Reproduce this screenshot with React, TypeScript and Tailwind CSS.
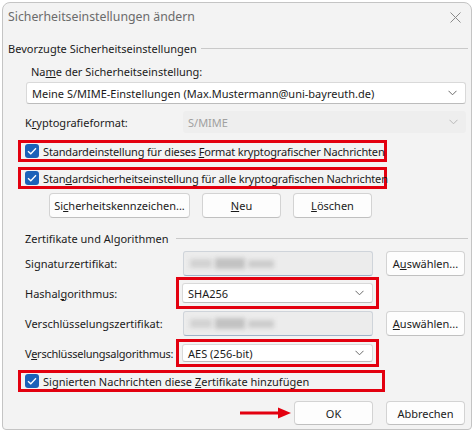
import React from 'react';

const font = { fontFamily: '"Noto Sans", "Open Sans", sans-serif' };

function Chevron({ light = false }: { light?: boolean }) {
  return (
    <svg width="9" height="6" viewBox="0 0 9 6" className="shrink-0">
      <path d="M0.5 0.8 L4.5 4.8 L8.5 0.8" fill="none" stroke={light ? '#b8b8b8' : '#6b6b6b'} strokeWidth="1" />
    </svg>
  );
}

function Check() {
  return (
    <span className="w-[14px] h-[14px] rounded-[3px] bg-[#1c62b9] flex items-center justify-center shrink-0">
      <svg width="10" height="8" viewBox="0 0 10 8">
        <path d="M1 4.2 L3.8 6.8 L9 1.2" fill="none" stroke="#ffffff" strokeWidth="1.3" />
      </svg>
    </span>
  );
}

function Btn({ children, w }: { children: React.ReactNode; w: string }) {
  return (
    <div className={`${w} h-full flex items-center justify-center bg-[#fdfdfd] border border-[#d3d3d3] border-b-[#c0c0c0] rounded-[4px] text-[#1b1b1b]`}>
      {children}
    </div>
  );
}

function Blurred() {
  return (
    <div className="w-[190px] h-full bg-[#ececec] border border-[#cfd4da] border-b-[#9fb2c8] rounded-[3px] overflow-hidden flex items-center pl-[6px] gap-[3px]">
      <div className="w-[22px] h-[9px] bg-[#d2d2d2] blur-[2px]" />
      <div className="w-[30px] h-[11px] bg-[#c2c2c2] blur-[2px]" />
      <div className="w-[26px] h-[8px] bg-[#cccccc] blur-[2px]" />
    </div>
  );
}

function Select({ text }: { text: string }) {
  return (
    <div className="w-full h-full bg-white border border-[#d9d9d9] border-b-[#bcbcbc] rounded-[3px] flex items-center justify-between pl-[5px] pr-[8px] text-[#1b1b1b]">
      <span>{text}</span>
      <Chevron />
    </div>
  );
}

export default function App() {
  return (
    <div className="w-[474px] h-[435px] bg-white pl-[2px] pt-[2px] text-[11px] leading-none" style={font}>
      <div className="w-[470px] h-[428px] bg-[#f3f3f3] border border-[#c4c4c4] rounded-t-[8px] rounded-b-[4px] flex flex-col text-[#1b1b1b]">
        {/* title bar */}
        <div className="h-[28px] flex items-center justify-between pl-[5px] pr-[10px]">
          <span className="text-[12.3px] text-[#6b6b6b]">Sicherheitseinstellungen ändern</span>
          <svg width="11" height="11" viewBox="0 0 11 11">
            <path d="M0.5 0.5 L10.5 10.5 M10.5 0.5 L0.5 10.5" stroke="#8a8a8a" strokeWidth="1" />
          </svg>
        </div>

        {/* group 1 */}
        <div className="mt-[8px] h-[18px] flex items-center pl-[5px] pr-[3px]">
          <span>Bevorzugte Sicherheitseinstellungen</span>
          <div className="flex-1 h-px bg-[#c9c9c9] ml-[4px]" />
        </div>

        <div className="mt-[6px] h-[16px] flex items-center pl-[28px]">
          <span>Na<u>m</u>e der Sicherheitseinstellung:</span>
        </div>

        <div className="mt-[3px] h-[22px] ml-[23px] w-[440px]">
          <Select text="Meine S/MIME-Einstellungen (Max.Mustermann@uni-bayreuth.de)" />
        </div>

        <div className="mt-[7px] h-[22px] flex items-center pl-[22px]">
          <span className="w-[158px]">K<u>r</u>yptografieformat:</span>
          <div className="w-[283px] h-full bg-[#eeeeee] rounded-[3px] flex items-center justify-between pl-[5px] pr-[8px] text-[#a0a0a0]">
            <span>S/MIME</span>
            <Chevron light />
          </div>
        </div>

        <div className="mt-[7px] h-[22px] ml-[15px] w-[369px] border-[3px] border-[#e3000f] flex items-center pl-[4px] gap-[4px] whitespace-nowrap">
          <Check />
          <span className="tracking-[-0.16px]">Standardeinstellung für dieses <u>F</u>ormat kryptografischer Nachrichten</span>
        </div>

        <div className="mt-[5px] h-[22px] ml-[15px] w-[369px] border-[3px] border-[#e3000f] flex items-center pl-[4px] gap-[4px] whitespace-nowrap">
          <Check />
          <span className="tracking-[-0.16px]">Stan<u>d</u>ardsicherheitseinstellung für alle kryptografischen Nachrichten</span>
        </div>

        <div className="mt-[4px] h-[25px] flex ml-[46px] gap-[12px]">
          <Btn w="w-[141px]">Si<u>c</u>herheitskennzeichen...</Btn>
          <Btn w="w-[79px]"><u>N</u>eu</Btn>
          <Btn w="w-[79px]"><u>L</u>öschen</Btn>
        </div>

        {/* group 2 */}
        <div className="mt-[11px] h-[18px] flex items-center pl-[22px] pr-[3px]">
          <span>Zertifikate und Algorithmen</span>
          <div className="flex-1 h-px bg-[#c9c9c9] ml-[7px]" />
        </div>

        <div className="mt-[4px] h-[25px] flex items-center pl-[22px]">
          <span className="w-[158px]">Signaturzertifikat:</span>
          <Blurred />
          <div className="ml-[13px] h-full">
            <Btn w="w-[79px]">A<u>u</u>swählen...</Btn>
          </div>
        </div>

        <div className="mt-[1px] h-[32px] flex items-center pl-[22px]">
          <span className="w-[151px]">Hashal<u>g</u>orithmus:</span>
          <div className="w-[203px] h-full border-[3px] border-[#e3000f] p-[3px]">
            <Select text="SHA256" />
          </div>
        </div>

        <div className="mt-[2px] h-[25px] flex items-center pl-[22px]">
          <span className="w-[158px]">Verschlüsselungszertifikat:</span>
          <Blurred />
          <div className="ml-[13px] h-full">
            <Btn w="w-[79px]"><u>A</u>uswählen...</Btn>
          </div>
        </div>

        <div className="mt-[3px] h-[28px] flex items-center pl-[22px]">
          <span className="w-[151px] whitespace-nowrap tracking-[-0.25px]">V<u>e</u>rschlüsselungsalgorithmus:</span>
          <div className="w-[203px] h-full border-[3px] border-[#e3000f] px-[3px] py-[2px]">
            <Select text="AES (256-bit)" />
          </div>
        </div>

        <div className="mt-[3px] h-[22px] ml-[15px] w-[367px] border-[3px] border-[#e3000f] flex items-center pl-[4px] gap-[4px] whitespace-nowrap">
          <Check />
          <span>Signierten Nachrichten diese <u>Z</u>ertifikate hinzufügen</span>
        </div>

        <div className="mt-[9px] h-[24px] flex items-center ml-[237px]">
          <svg width="52" height="12" viewBox="0 0 52 12" className="shrink-0">
            <path d="M0 6 L42 6" stroke="#e3000f" strokeWidth="3" />
            <path d="M38 0.5 L51 6 L38 11.5 Z" fill="#e3000f" />
          </svg>
          <div className="ml-[2px] h-full">
            <Btn w="w-[79px]">OK</Btn>
          </div>
          <div className="ml-[13px] h-full">
            <Btn w="w-[79px]">Abbrechen</Btn>
          </div>
        </div>
      </div>
    </div>
  );
}
